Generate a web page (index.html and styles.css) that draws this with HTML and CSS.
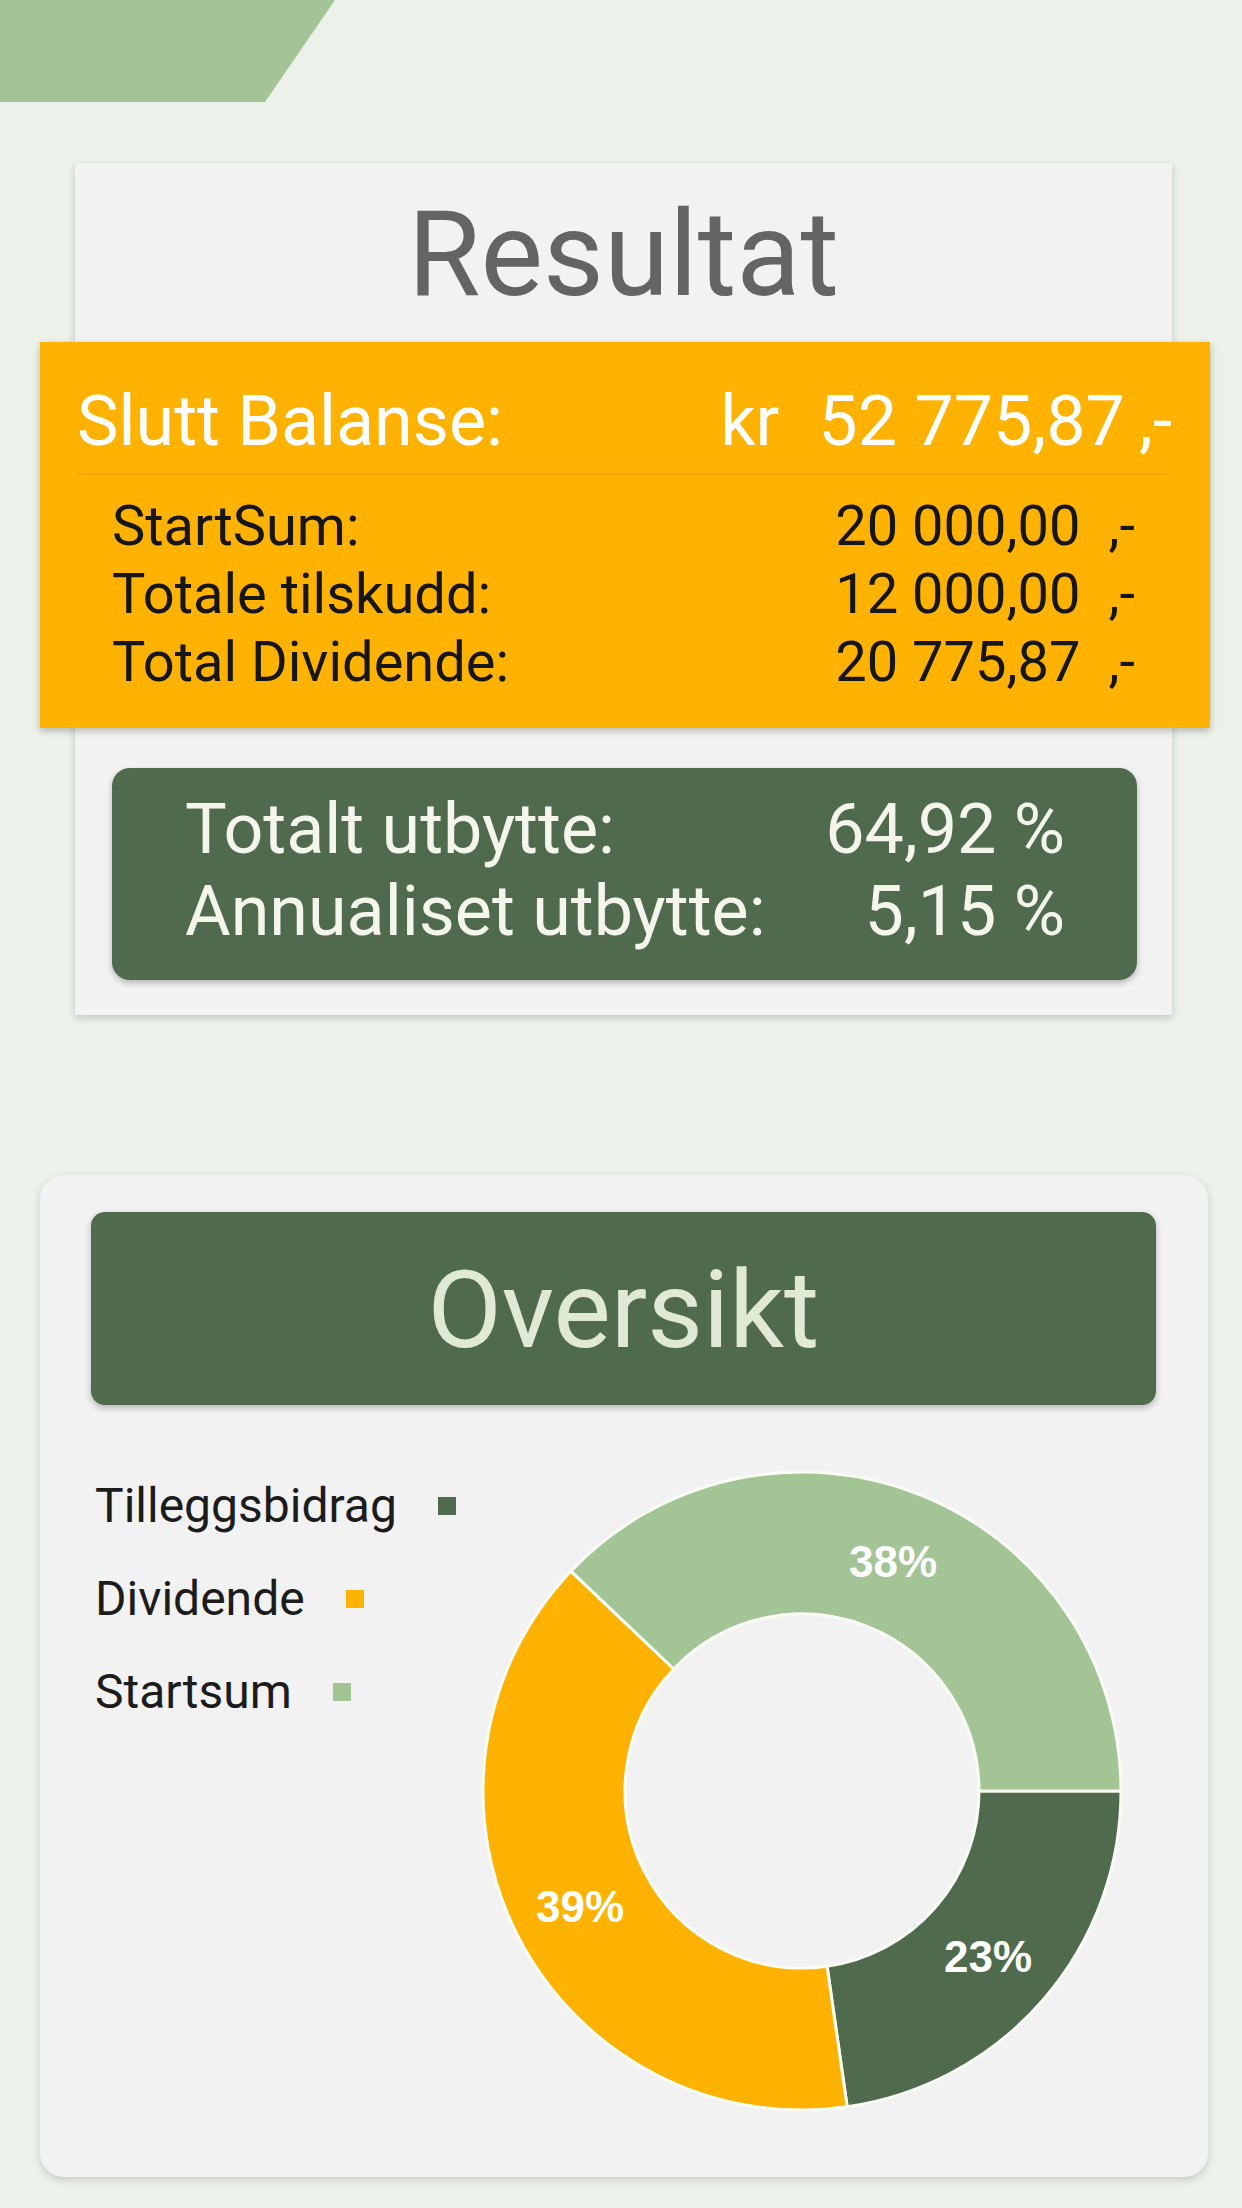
FILE: index.html
```html
<!DOCTYPE html>
<html lang="no">
<head>
<meta charset="utf-8">
<title>Resultat</title>
<link rel="stylesheet" href="styles.css">
</head>
<body>
<div class="page">
  <div class="tab"></div>

  <section class="result-card">
    <h1 class="result-title">Resultat</h1>
    <div class="balance">
      <div class="balance-main">
        <span>Slutt Balanse:</span>
        <span class="balance-value"><span class="kr">kr</span><span>52 775,87</span><span class="dash">,-</span></span>
      </div>
      <div class="divider"></div>
      <div class="balance-rows">
        <span>StartSum:</span><span class="num">20 000,00</span><span>,-</span>
        <span>Totale tilskudd:</span><span class="num">12 000,00</span><span>,-</span>
        <span>Total Dividende:</span><span class="num">20 775,87</span><span>,-</span>
      </div>
    </div>
    <div class="yield">
      <span>Totalt utbytte:</span><span class="num">64,92 %</span>
      <span>Annualiset utbytte:</span><span class="num">5,15 %</span>
    </div>
  </section>

  <section class="overview-card">
    <h2 class="overview-title">Oversikt</h2>
    <div class="chart-row">
      <ul class="legend">
        <li>Tilleggsbidrag<span class="mark mark-dark"></span></li>
        <li>Dividende<span class="mark mark-orange"></span></li>
        <li>Startsum<span class="mark mark-light"></span></li>
      </ul>
      <svg class="donut" width="640" height="640" viewBox="0 0 640 640">
        <path class="seg-dark" d="M 639 320 A 319 319 0 0 1 365.18 635.78 L 345.07 495.22 A 177 177 0 0 0 497 320 Z"/>
        <path class="seg-orange" d="M 365.18 635.78 A 319 319 0 0 1 88.89 100.11 L 191.77 198 A 177 177 0 0 0 345.07 495.22 Z"/>
        <path class="seg-light" d="M 88.89 100.11 A 319 319 0 0 1 639 320 L 497 320 A 177 177 0 0 0 191.77 198 Z"/>
        <text class="pct" x="411" y="106">38%</text>
        <text class="pct" x="98" y="451">39%</text>
        <text class="pct" x="506" y="501">23%</text>
      </svg>
    </div>
  </section>
</div>
</body>
</html>
```

FILE: styles.css
```css
* { box-sizing: border-box; }

html, body {
  margin: 0;
  padding: 0;
}

body {
  background: #ecf2ea;
  font-family: Roboto, "Liberation Sans", Arial, sans-serif;
  width: 1242px;
  height: 2208px;
  overflow: hidden;
}

.page {
  width: 1242px;
  display: flow-root;
}

.tab {
  width: 335px;
  height: 102px;
  background: #a3c496;
  clip-path: polygon(0 0, 100% 0, 79.1% 100%, 0 100%);
}

.result-card {
  margin: 61px 70px 0 75px;
  background: #f2f2f2;
  box-shadow: 0 3px 8px rgba(0, 0, 0, 0.18);
  padding-bottom: 35px;
}

.result-title {
  margin: 0;
  padding-top: 6px;
  font-size: 118px;
  line-height: 173px;
  font-weight: 400;
  color: #646464;
  text-align: center;
}

.balance {
  margin: 0 -38px 0 -35px;
  background: #ffb300;
  padding: 37px 38px 32px 37px;
  box-shadow: 0 3px 7px rgba(0, 0, 0, 0.25);
  position: relative;
}

.balance-main {
  display: flex;
  justify-content: space-between;
  font-size: 70px;
  line-height: 84px;
  color: #ffffff;
}

.balance-value .kr {
  margin-right: 39px;
}

.balance-value .dash {
  margin-left: 14px;
}

.divider {
  height: 2px;
  margin: 10px 4px 17px 0;
  background: rgba(150, 90, 0, 0.12);
}

.balance-rows {
  margin: 0 37px 0 35px;
  display: grid;
  grid-template-columns: 1fr auto auto;
  column-gap: 28px;
  font-size: 56px;
  line-height: 68px;
  color: #161616;
}

.balance-rows .num,
.yield .num {
  text-align: right;
}

.yield {
  margin: 40px 35px 0 37px;
  background: #506a4e;
  border-radius: 18px;
  padding: 20px 72px 28px 73px;
  display: grid;
  grid-template-columns: 1fr auto;
  font-size: 70px;
  line-height: 82px;
  color: #f4f6ec;
  box-shadow: 0 3px 6px rgba(0, 0, 0, 0.25);
}

.overview-card {
  margin: 160px 34px 31px 40px;
  background: #f2f2f2;
  border-radius: 24px;
  box-shadow: 0 3px 8px rgba(0, 0, 0, 0.16);
  padding: 37px 0 66px 0;
}

.overview-title {
  margin: 0 52px 0 51px;
  height: 193px;
  padding-top: 3px;
  line-height: 190px;
  font-size: 108px;
  font-weight: 400;
  text-align: center;
  color: #dfe9d3;
  background: #506a4e;
  border-radius: 14px;
  box-shadow: 0 3px 7px rgba(0, 0, 0, 0.25);
}

.chart-row {
  display: flex;
  align-items: flex-start;
  margin-top: 66px;
  padding-left: 55px;
}

.legend {
  list-style: none;
  margin: 0;
  padding: 5px 0 0 0;
  display: flex;
  flex-direction: column;
  gap: 33px;
}

.legend li {
  display: flex;
  align-items: center;
  font-size: 48px;
  line-height: 60px;
  color: #1c1c1c;
}

.mark {
  width: 18px;
  height: 18px;
  margin-left: 41px;
}

.mark-dark { background: #506a4e; }
.mark-orange { background: #ffb300; }
.mark-light { background: #a3c596; }

.donut {
  display: block;
  margin-left: auto;
  margin-right: 86px;
  flex: none;
}

.seg-dark { fill: #506a4e; }
.seg-orange { fill: #ffb300; }
.seg-light { fill: #a3c596; }

.donut path {
  stroke: #f8fcf4;
  stroke-width: 3;
  stroke-linejoin: miter;
}

.pct {
  font-family: "Liberation Sans", Arial, sans-serif;
  font-weight: 700;
  font-size: 44px;
  fill: #ffffff;
  text-anchor: middle;
}
```
